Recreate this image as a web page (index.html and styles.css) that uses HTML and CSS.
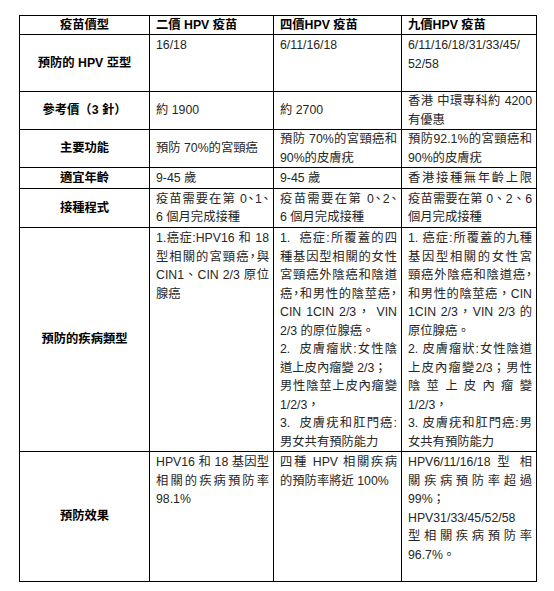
FILE: index.html
```html
<!DOCTYPE html>
<html lang="zh-Hant">
<head>
<meta charset="utf-8">
<title>HPV 疫苗比較</title>
<link rel="stylesheet" href="styles.css">
</head>
<body>
<table class="hpv">
  <colgroup>
    <col class="c1"><col class="c2"><col class="c3"><col class="c4">
  </colgroup>
  <tr class="r-head">
    <th class="label">疫苗價型</th>
    <th>二價 HPV 疫苗</th>
    <th>四價HPV 疫苗</th>
    <th>九價HPV 疫苗</th>
  </tr>
  <tr class="r-type top">
    <th class="label">預防的 HPV 亞型</th>
    <td><span class="ln">16/18</span></td>
    <td><span class="ln">6/11/16/18</span></td>
    <td><span class="ln j">6/11/16/18/31/33/45/</span><span class="ln">52/58</span></td>
  </tr>
  <tr class="r-price">
    <th class="label">參考價（3 針）</th>
    <td><span class="ln">約 1900</span></td>
    <td><span class="ln">約 2700</span></td>
    <td><span class="ln j">香港 中環專科約 4200</span><span class="ln">有優惠</span></td>
  </tr>
  <tr class="r-func">
    <th class="label">主要功能</th>
    <td><span class="ln">預防 70%的宮頸癌</span></td>
    <td><span class="ln j">預防 70%的宮頸癌和</span><span class="ln">90%的皮膚疣</span></td>
    <td><span class="ln j">預防92.1%的宮頸癌和</span><span class="ln">90%的皮膚疣</span></td>
  </tr>
  <tr class="r-age">
    <th class="label">適宜年齡</th>
    <td><span class="ln">9-45 歲</span></td>
    <td><span class="ln">9-45 歲</span></td>
    <td><span class="ln j">香港接種無年齡上限</span></td>
  </tr>
  <tr class="r-sched">
    <th class="label">接種程式</th>
    <td><span class="ln j halt">疫苗需要在第 0、1、</span><span class="ln">6 個月完成接種</span></td>
    <td><span class="ln j halt">疫苗需要在第 0、2、</span><span class="ln">6 個月完成接種</span></td>
    <td><span class="ln j">疫苗需要在第 0、2、6</span><span class="ln">個月完成接種</span></td>
  </tr>
  <tr class="r-disease top">
    <th class="label">預防的疾病類型</th>
    <td>
      <span class="ln j">1.癌症:HPV16 和 18</span>
      <span class="ln j halt">型相關的宮頸癌，與</span>
      <span class="ln j">CIN1、CIN 2/3 原位</span>
      <span class="ln">腺癌</span>
    </td>
    <td>
      <span class="ln j">1.&nbsp; 癌症:所覆蓋的四</span>
      <span class="ln j">種基因型相關的女性</span>
      <span class="ln j">宮頸癌外陰癌和陰道</span>
      <span class="ln j halt">癌，和男性的陰莖癌，</span>
      <span class="ln j">CIN 1CIN 2/3， VIN</span>
      <span class="ln">2/3 的原位腺癌。</span>
      <span class="ln j">2.&nbsp; 皮膚瘤狀:女性陰</span>
      <span class="ln">道上皮內瘤變 2/3；</span>
      <span class="ln j">男性陰莖上皮內瘤變</span>
      <span class="ln">1/2/3，</span>
      <span class="ln j">3.&nbsp; 皮膚疣和肛門癌:</span>
      <span class="ln">男女共有預防能力</span>
    </td>
    <td>
      <span class="ln j">1. 癌症:所覆蓋的九種</span>
      <span class="ln j">基因型相關的女性宮</span>
      <span class="ln j halt">頸癌外陰癌和陰道癌，</span>
      <span class="ln j">和男性的陰莖癌，CIN</span>
      <span class="ln j">1CIN 2/3，VIN 2/3 的</span>
      <span class="ln">原位腺癌。</span>
      <span class="ln j">2. 皮膚瘤狀:女性陰道</span>
      <span class="ln j">上皮內瘤變2/3；男性</span>
      <span class="ln j">陰莖上皮內瘤變</span>
      <span class="ln">1/2/3，</span>
      <span class="ln j">3. 皮膚疣和肛門癌:男</span>
      <span class="ln">女共有預防能力</span>
    </td>
  </tr>
  <tr class="r-effect top">
    <th class="label">預防效果</th>
    <td>
      <span class="ln j">HPV16 和 18 基因型</span>
      <span class="ln j">相關的疾病預防率</span>
      <span class="ln">98.1%</span>
    </td>
    <td>
      <span class="ln j">四種 HPV 相關疾病</span>
      <span class="ln">的預防率將近 100%</span>
    </td>
    <td>
      <span class="ln j">HPV6/11/16/18 型 相</span>
      <span class="ln j">關疾病預防率超過</span>
      <span class="ln">99%；</span>
      <span class="ln">HPV31/33/45/52/58</span>
      <span class="ln j">型相關疾病預防率</span>
      <span class="ln">96.7%。</span>
    </td>
  </tr>
</table>
</body>
</html>
```

FILE: styles.css
```css
html, body {
  margin: 0;
  padding: 0;
  background: #ffffff;
}

body {
  font-family: "Liberation Sans", "Noto Sans CJK TC", sans-serif;
  font-size: 12.3px;
  color: #262626;
}

.hpv {
  margin: 15px 0 0 19px;
  border-collapse: collapse;
  table-layout: fixed;
  width: 517px;
  border: 1px solid #000;
}

.c1 { width: 130px; }
.c2 { width: 124px; }
.c3 { width: 128px; }
.c4 { width: 135px; }

.hpv th,
.hpv td {
  border: 1px solid #000;
  padding: 0 4px 0 6px;
  line-height: 18.5px;
  vertical-align: middle;
  text-align: left;
  font-weight: normal;
}

.hpv th {
  font-weight: bold;
  color: #000;
}

.hpv .r-head th {
  line-height: 17px;
}

.hpv th.label {
  text-align: center;
  vertical-align: middle;
  padding: 0 4px;
}

.hpv .top td {
  vertical-align: top;
}

.hpv .top td .ln:first-child {
  margin-top: 1px;
}

.ln {
  display: block;
  white-space: nowrap;
}

.ln.j {
  text-align: justify;
  text-align-last: justify;
}

.ln.halt {
  font-feature-settings: "halt";
}

.r-head > * { height: 18px; }
.r-type > * { height: 56px; }
.r-price > * { height: 37px; }
.r-func > * { height: 35px; }
.r-age > * { height: 20px; }
.r-sched > * { height: 38px; }
.r-disease > * { height: 223px; }
.r-effect > * { height: 129px; }
```
